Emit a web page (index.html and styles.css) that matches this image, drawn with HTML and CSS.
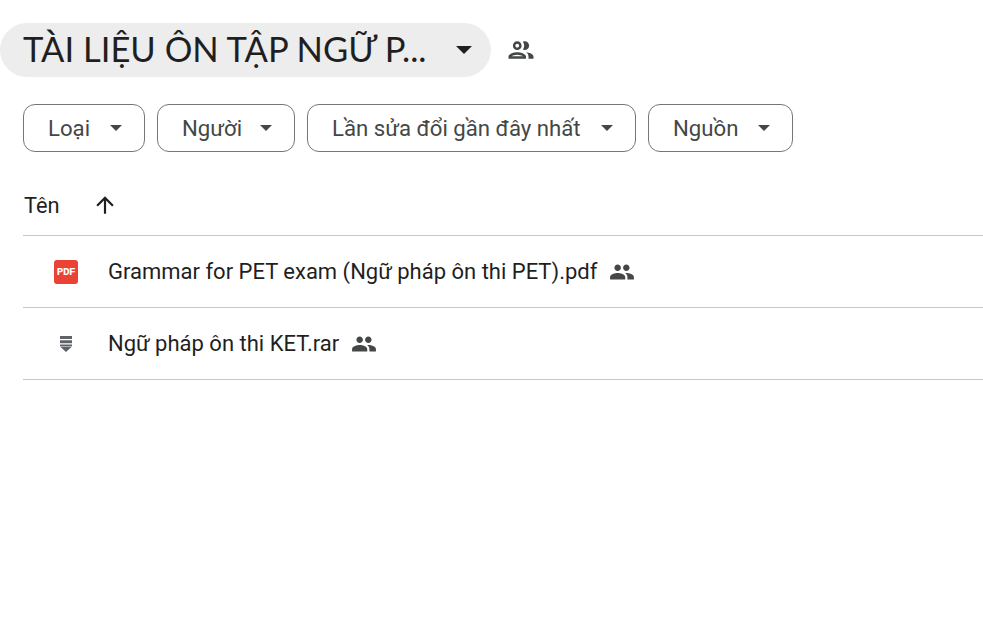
FILE: index.html
```html
<!DOCTYPE html>
<html lang="en">
<head>
    <meta charset="UTF-8">
    <title>TÀI LIỆU ÔN TẬP NGỮ PHÁP</title>
    <link rel="stylesheet" href="styles.css">
</head>
<body>
    <div class="title-row">
        <div class="title-pill">
            <span class="title-text">TÀI LIỆU ÔN TẬP NGỮ P...</span>
            <svg class="title-caret" width="16" height="8" viewBox="0 0 16 8"><path d="M0 0h16L8 8z"/></svg>
        </div>
        <svg class="shared-outline" width="30" height="30" viewBox="0 0 24 24"><path d="M9 13.75c-2.34 0-7 1.17-7 3.5V19h14v-1.750c0-2.330-4.660-3.500-7-3.500zM4.340 17c.84-.58 2.870-1.250 4.660-1.250s3.820.67 4.660 1.250H4.340zM9 12c1.930 0 3.500-1.570 3.500-3.500S10.930 5 9 5 5.500 6.570 5.500 8.500 7.070 12 9 12zm0-5c.83 0 1.500.67 1.500 1.500S9.830 10 9 10s-1.500-.67-1.500-1.500S8.170 7 9 7zm7.040 6.810c1.160.84 1.960 1.960 1.960 3.440V19h4v-1.750c0-2.020-3.500-3.170-5.960-3.440zM15 12c1.930 0 3.500-1.570 3.500-3.500S16.930 5 15 5c-.54 0-1.040.13-1.500.35.630.89 1 1.980 1 3.150s-.37 2.260-1 3.150c.46.22.96.35 1.500.35z"/></svg>
    </div>

    <div class="filters">
        <div class="chip chip-type"><span>Loại</span><svg width="12" height="6" viewBox="0 0 12 6"><path d="M0 0h12L6 6z"/></svg></div>
        <div class="chip chip-people"><span>Người</span><svg width="12" height="6" viewBox="0 0 12 6"><path d="M0 0h12L6 6z"/></svg></div>
        <div class="chip chip-modified"><span>Lần sửa đổi gần đây nhất</span><svg width="12" height="6" viewBox="0 0 12 6"><path d="M0 0h12L6 6z"/></svg></div>
        <div class="chip chip-source"><span>Nguồn</span><svg width="12" height="6" viewBox="0 0 12 6"><path d="M0 0h12L6 6z"/></svg></div>
    </div>

    <div class="file-list">
        <div class="list-head">
            <span class="head-name">Tên</span>
            <svg class="sort-arrow" width="26" height="26" viewBox="0 0 24 24"><path d="M4 12l1.410 1.410L11 7.830V20h2V7.830l5.580 5.590L20 12l-8-8-8 8z"/></svg>
        </div>
        <div class="file-row">
            <div class="file-icon"><div class="pdf-icon">PDF</div></div>
            <span class="file-name">Grammar for PET exam (Ngữ pháp ôn thi PET).pdf</span>
            <svg class="shared" width="26" height="26" viewBox="0 0 24 24"><path d="M16 11c1.660 0 2.990-1.340 2.990-3S17.660 5 16 5s-3 1.340-3 3 1.340 3 3 3zm-8 0c1.660 0 2.990-1.340 2.990-3S9.660 5 8 5 5 6.340 5 8s1.340 3 3 3zm0 2c-2.330 0-7 1.170-7 3.500V19h14v-2.500c0-2.330-4.670-3.500-7-3.500zm8 0c-.29 0-.62.020-.97.050 1.160.84 1.970 1.970 1.970 3.450V19h6v-2.500c0-2.330-4.670-3.500-7-3.500z"/></svg>
        </div>
        <div class="file-row">
            <div class="file-icon">
                <svg width="12" height="16" viewBox="0 0 12 16"><path d="M0 0h12v3H0zM0 4.200h12v3H0zM0 8.400h12v1.700H0zM0 10.600h12L6 16z"/></svg>
            </div>
            <span class="file-name">Ngữ pháp ôn thi KET.rar</span>
            <svg class="shared" width="26" height="26" viewBox="0 0 24 24"><path d="M16 11c1.660 0 2.990-1.340 2.990-3S17.660 5 16 5s-3 1.340-3 3 1.340 3 3 3zm-8 0c1.660 0 2.990-1.340 2.990-3S9.660 5 8 5 5 6.340 5 8s1.340 3 3 3zm0 2c-2.330 0-7 1.170-7 3.500V19h14v-2.500c0-2.330-4.670-3.500-7-3.500zm8 0c-.29 0-.62.020-.97.050 1.160.84 1.970 1.970 1.970 3.450V19h6v-2.500c0-2.330-4.670-3.500-7-3.500z"/></svg>
        </div>
    </div>
</body>
</html>
```

FILE: styles.css
```css
body {
    margin: 0;
    background-color: #fff;
    color: #1f1f1f;
    font-family: Roboto, "Liberation Sans", sans-serif;
    overflow: hidden;
}
.title-row {
    display: flex;
    align-items: center;
    padding-top: 23px;
}
.title-pill {
    display: flex;
    align-items: center;
    box-sizing: border-box;
    width: 491px;
    height: 54px;
    padding-left: 23px;
    border-radius: 27px;
    background-color: #ededed;
}
.title-text {
    width: 433px;
    padding-bottom: 3px;
    font-family: Lato, sans-serif;
    font-size: 34.6px;
    white-space: nowrap;
}
.title-caret {
    fill: #1f1f1f;
}
.shared-outline {
    margin-left: 15px;
    fill: #444746;
}
.filters {
    display: flex;
    gap: 12px;
    padding: 27px 0 0 23px;
}
.chip {
    display: flex;
    align-items: center;
    justify-content: space-between;
    box-sizing: border-box;
    height: 48px;
    padding: 0 22px 0 24px;
    border: 1px solid #747775;
    border-radius: 12px;
    color: #444746;
    font-size: 22.2px;
}
.chip span {
    padding-bottom: 1px;
}
.chip svg {
    fill: #444746;
}
.chip-type { width: 122px; }
.chip-people { width: 138px; }
.chip-modified { width: 329px; }
.chip-source { width: 145px; }
.file-list {
    margin-left: 23px;
}
.list-head {
    display: flex;
    align-items: center;
    box-sizing: border-box;
    height: 84px;
    padding-top: 23px;
    border-bottom: 1px solid #c7c7c7;
    font-size: 21.8px;
    font-weight: 450;
}
.head-name {
    width: 68px;
    padding-left: 1px;
}
.sort-arrow {
    fill: #1f1f1f;
}
.file-row {
    display: flex;
    align-items: center;
    box-sizing: border-box;
    height: 72px;
    border-bottom: 1px solid #c7c7c7;
    font-size: 22px;
    font-weight: 450;
}
.file-icon {
    display: flex;
    justify-content: center;
    box-sizing: border-box;
    width: 85px;
    padding-left: 1px;
}
.file-icon svg {
    fill: #5f6368;
}
.pdf-icon {
    width: 24px;
    height: 24px;
    border-radius: 3px;
    background-color: #ea4335;
    color: #fff;
    font-family: "Liberation Mono", monospace;
    font-size: 11px;
    font-weight: 700;
    letter-spacing: -0.4px;
    line-height: 24px;
    text-align: center;
}
.shared {
    margin-left: 12px;
    fill: #444746;
}
```
